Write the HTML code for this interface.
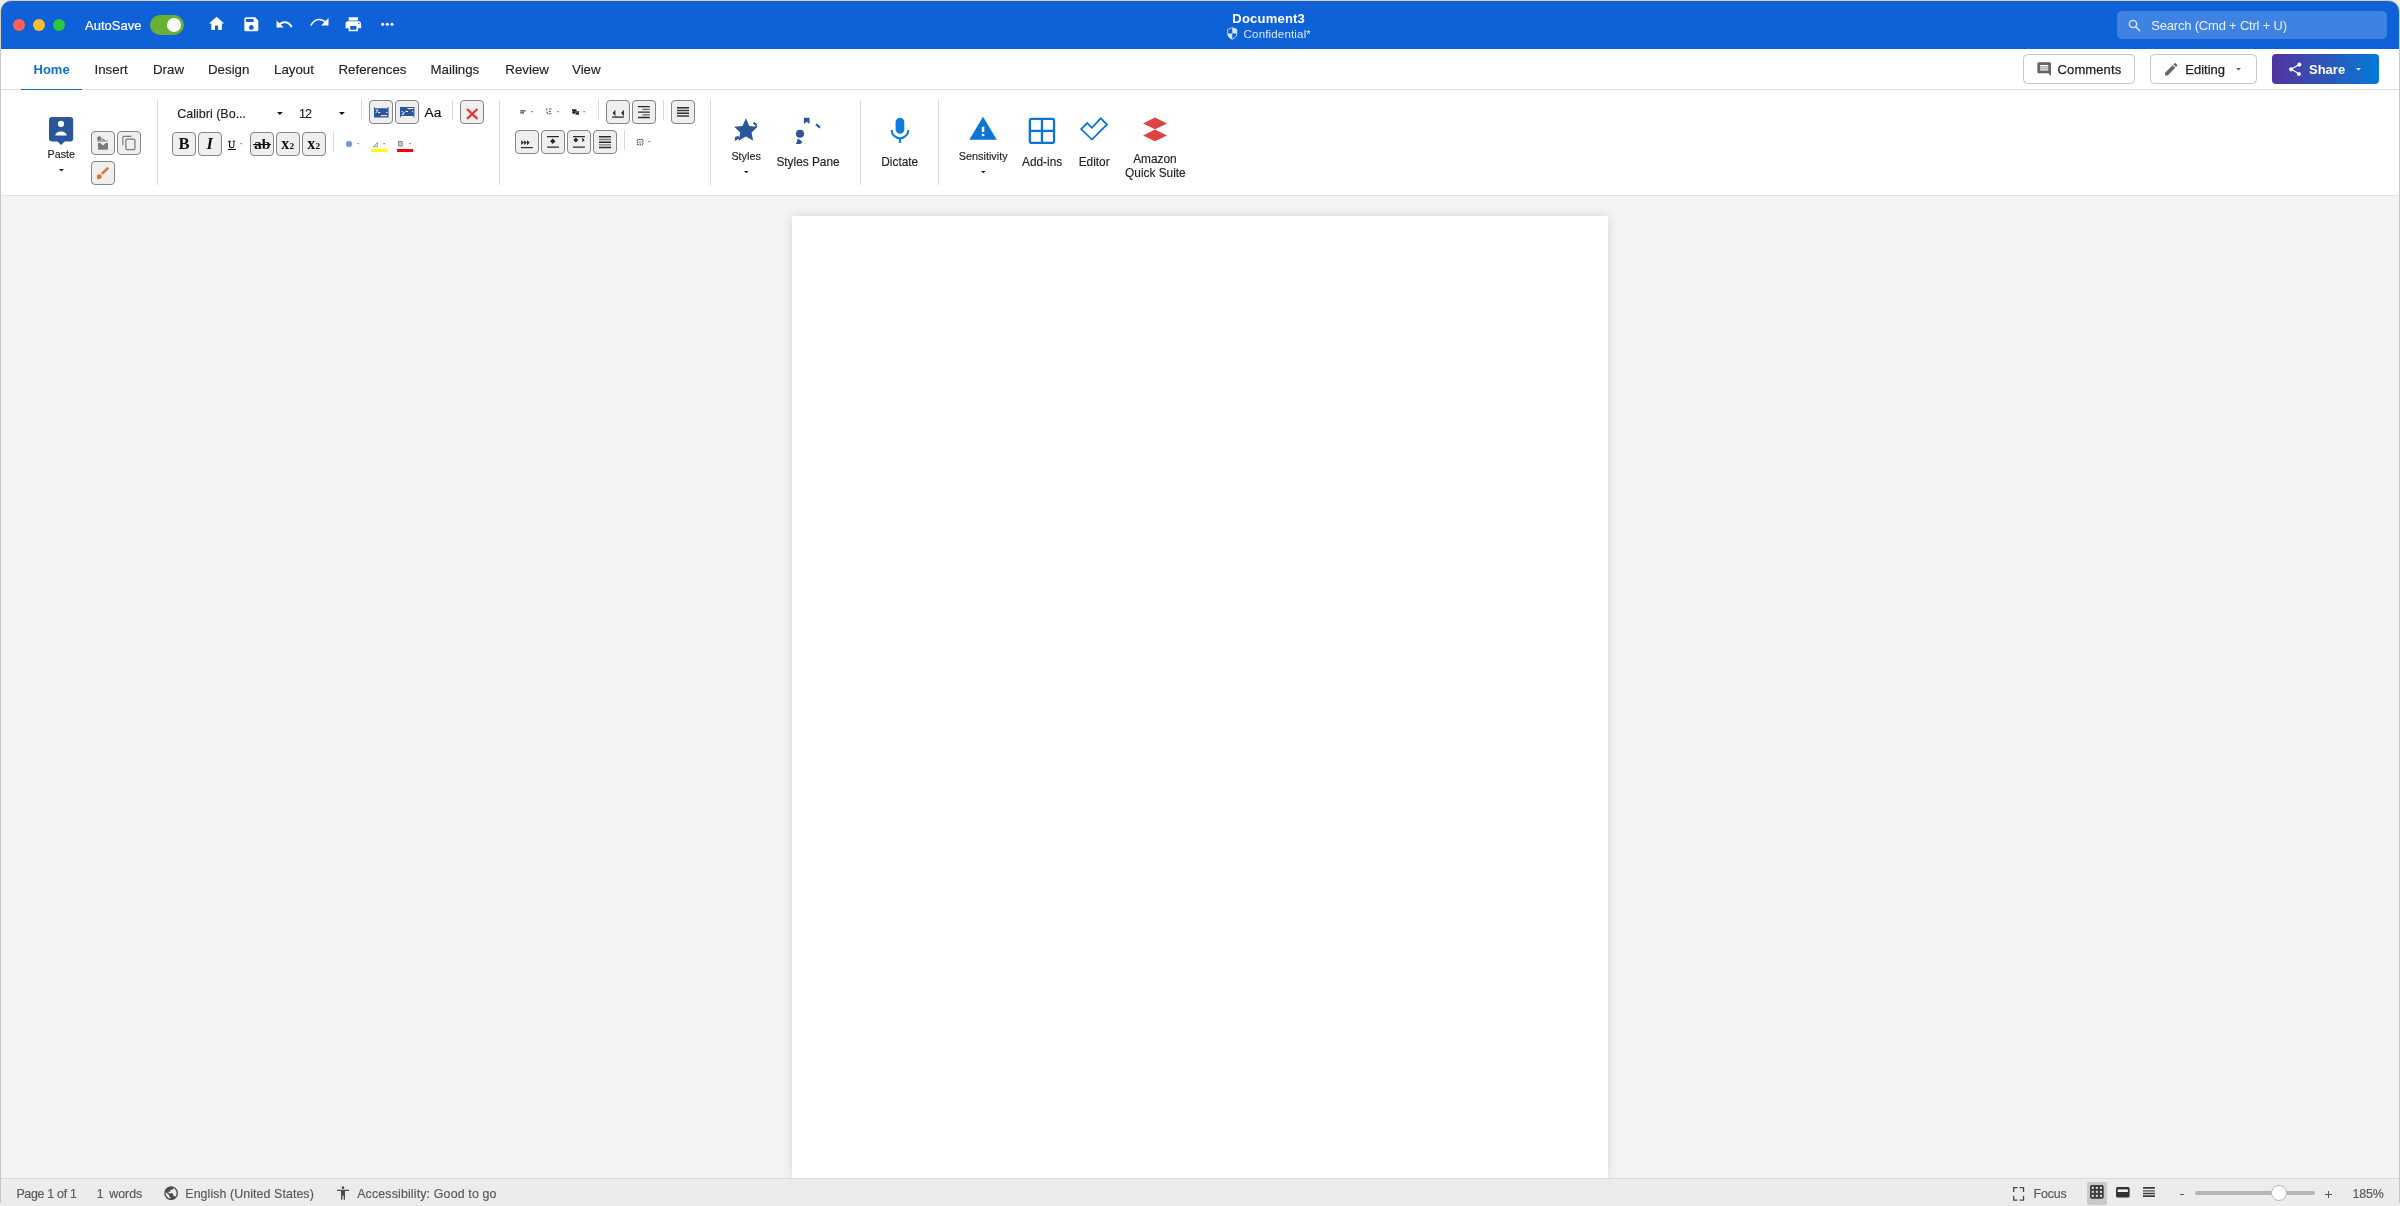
<!DOCTYPE html>
<html>
<head>
<meta charset="utf-8">
<title>Document3</title>
<style>
*{box-sizing:border-box;margin:0;padding:0}
html,body{width:2400px;height:1206px;overflow:hidden;background:#efefef;font-family:"Liberation Sans",sans-serif;}
.abs{position:absolute}
#root{position:absolute;left:0;top:0;width:2400px;height:1206px;will-change:transform}
.t{position:absolute;white-space:nowrap}
.btn{background:#efefef;border:1px solid #858585;border-radius:4px}
svg{overflow:visible}
</style>
</head>
<body>
<div id="root">
<div class="abs" style="left:0px;top:0px;width:2400.00px;height:49.00px;background:#dcd2c2;border-radius:11px 11px 0 0"></div>
<div class="abs" style="left:0px;top:49px;width:2400.00px;height:1154.00px;background:#c6c6c6;"></div>
<div class="abs" style="left:0px;top:1203px;width:2400.00px;height:3.00px;background:#ececec;"></div>
<div class="abs" style="left:1px;top:1px;width:2398.00px;height:48.00px;background:#0e61d7;border-radius:10px 10px 0 0"></div>
<div class="abs" style="left:1px;top:49px;width:2398.00px;height:146.00px;background:#ffffff;"></div>
<div class="abs" style="left:1px;top:89px;width:2398.00px;height:1.00px;background:#dfdfdf;"></div>
<div class="abs" style="left:1px;top:195px;width:2398.00px;height:1.00px;background:#e1e1e1;"></div>
<div class="abs" style="left:1px;top:196px;width:2398.00px;height:982.00px;background:#f3f3f3;"></div>
<div class="abs" style="left:792px;top:216px;width:816px;height:962px;background:#fff;box-shadow:0 0 9px rgba(0,0,0,.115)"></div>
<div class="abs" style="left:1px;top:1178px;width:2398.00px;height:28.00px;background:#ececec;"></div>
<div class="abs" style="left:1px;top:1178px;width:2398.00px;height:1.00px;background:#dbdbdb;"></div>
<div class="abs" style="left:13px;top:19px;width:12.00px;height:12.00px;background:#ff5f57;border-radius:6px"></div>
<div class="abs" style="left:33px;top:19px;width:12.00px;height:12.00px;background:#febc2e;border-radius:6px"></div>
<div class="abs" style="left:53px;top:19px;width:12.00px;height:12.00px;background:#28c840;border-radius:6px"></div>
<div class="t" style="left:85.00px;top:18px;font-size:13px;line-height:15px;color:#fff;-webkit-text-stroke:0.2px #fff;">AutoSave</div>
<div class="abs" style="left:150px;top:15px;width:34.00px;height:20.00px;background:#68b034;border-radius:10px"></div>
<div class="abs" style="left:167px;top:18px;width:14.00px;height:14.00px;background:#fff;border-radius:7px"></div>
<svg class="abs" style="left:206.8px;top:14.2px" width="19.2" height="19.2" viewBox="0 0 24 24"><path fill="#fff" d="M10 20v-5.5h4V20h4.6v-8h2.9L12 3.4 2.5 12h2.9v8z"/></svg>
<svg class="abs" style="left:241.7px;top:14.7px" width="18.67" height="18.67" viewBox="0 0 24 24"><path fill="#fff" d="M17 3H5c-1.11 0-2 .9-2 2v14c0 1.1.89 2 2 2h14c1.1 0 2-.9 2-2V7l-4-4zm-5 16c-1.66 0-3-1.34-3-3s1.34-3 3-3 3 1.34 3 3-1.34 3-3 3zm3-10H5V5h10v4z"/></svg>
<svg class="abs" style="left:275.4px;top:14.5px" width="18.67" height="18.67" viewBox="0 0 24 24"><path fill="#fff" d="M12.5 8c-2.65 0-5.05.99-6.9 2.6L2 7v9h9l-3.62-3.62c1.39-1.16 3.16-1.88 5.12-1.88 3.54 0 6.55 2.31 7.6 5.5l2.37-.78C21.08 11.03 17.15 8 12.5 8z"/></svg>
<svg class="abs" style="left:309.6px;top:13.7px" width="18.67" height="18.67" viewBox="0 0 24 24"><path fill="none" stroke="#fff" stroke-width="1.9" stroke-linecap="round" d="M1.4 14.2C4 9.5 8 7 12 7c3.5 0 6.3 1.6 8.3 4.3"/><path fill="#fff" d="M23.8 5.2v9.6h-9.4z"/></svg>
<svg class="abs" style="left:343.5px;top:14.7px" width="18.67" height="18.67" viewBox="0 0 24 24"><path fill="#fff" d="M19 8H5c-1.66 0-3 1.34-3 3v6h4v4h12v-4h4v-6c0-1.66-1.34-3-3-3zm-3 11H8v-5h8v5zm3-7c-.55 0-1-.45-1-1s.45-1 1-1 1 .45 1 1-.45 1-1 1zm-1-9H6v4h12V3z"/></svg>
<svg class="abs" style="left:377.5px;top:14.9px" width="18.67" height="18.67" viewBox="0 0 24 24"><circle cx="6" cy="12" r="1.95" fill="#fff"/><circle cx="12" cy="12" r="1.95" fill="#fff"/><circle cx="18" cy="12" r="1.95" fill="#fff"/></svg>
<div class="t" style="left:1232.30px;top:11px;font-size:13px;line-height:15px;color:#fff;font-weight:bold;letter-spacing:0.22px;">Document3</div>
<div class="t" style="left:1243.60px;top:28px;font-size:11.5px;line-height:12px;color:rgba(255,255,255,.86);letter-spacing:0.17px;">Confidential*</div>
<svg class="abs" style="left:1227px;top:26.5px" width="10.5" height="12.9" viewBox="0 0 22 27"><path d="M11 1.5 20.5 5v8.5c0 5.6-4 10-9.5 12C5 23.5 1.5 19.1 1.5 13.5V5z" fill="none" stroke="rgba(255,255,255,.84)" stroke-width="1.8"/><path d="M11 1.5 20.5 5v8.5H11z" fill="rgba(255,255,255,.84)"/><path d="M11 13.5v12C5 23.5 1.5 19.1 1.5 13.5z" fill="rgba(255,255,255,.84)"/></svg>
<div class="abs" style="left:2117px;top:11px;width:270.00px;height:28.00px;background:#3f83e2;border-radius:5px"></div>
<div class="t" style="left:2151.30px;top:18px;font-size:13px;line-height:15px;color:rgba(255,255,255,.88);letter-spacing:-0.2px;">Search (Cmd + Ctrl + U)</div>
<svg class="abs" style="left:2128.3px;top:18.6px" width="13.2" height="13.2" viewBox="0 0 14 14"><circle cx="5.3" cy="5.3" r="3.9" fill="none" stroke="rgba(255,255,255,.84)" stroke-width="1.4"/><path d="M8.2 8.2 12.4 12.4" stroke="rgba(255,255,255,.84)" stroke-width="1.5" stroke-linecap="round"/></svg>
<div class="t" style="left:33.50px;top:62px;font-size:13px;line-height:15px;color:#0f6fc6;font-weight:bold;">Home</div>
<div class="t" style="left:94.50px;top:62px;font-size:13.3px;line-height:15px;color:#242424;-webkit-text-stroke:0.15px #242424;">Insert</div>
<div class="t" style="left:153.00px;top:62px;font-size:13.3px;line-height:15px;color:#242424;-webkit-text-stroke:0.15px #242424;">Draw</div>
<div class="t" style="left:208.00px;top:62px;font-size:13.3px;line-height:15px;color:#242424;-webkit-text-stroke:0.15px #242424;">Design</div>
<div class="t" style="left:274.00px;top:62px;font-size:13.3px;line-height:15px;color:#242424;-webkit-text-stroke:0.15px #242424;">Layout</div>
<div class="t" style="left:338.50px;top:62px;font-size:13.3px;line-height:15px;color:#242424;-webkit-text-stroke:0.15px #242424;">References</div>
<div class="t" style="left:430.50px;top:62px;font-size:13.3px;line-height:15px;color:#242424;-webkit-text-stroke:0.15px #242424;">Mailings</div>
<div class="t" style="left:505.30px;top:62px;font-size:13.3px;line-height:15px;color:#242424;-webkit-text-stroke:0.15px #242424;">Review</div>
<div class="t" style="left:572.00px;top:62px;font-size:13.3px;line-height:15px;color:#242424;-webkit-text-stroke:0.15px #242424;">View</div>
<div class="abs" style="left:21px;top:88.7px;width:61.00px;height:1.50px;background:#0f6fc6;"></div>
<div class="abs" style="left:2023px;top:54px;width:112px;height:30px;border:1px solid #c6c6c6;border-radius:4.5px;background:#fff"></div>
<svg class="abs" style="left:2035.8px;top:60.6px" width="16.4" height="16.4" viewBox="0 0 24 24"><path fill="#666" d="M21.99 4c0-1.1-.89-2-1.990-2H4c-1.100 0-2 .9-2 2v12c0 1.100.9 2 2 2h14l4 4-.010-18zM18 14H6v-2h12v2zm0-3H6V9h12v2zm0-3H6V6h12v2z"/></svg>
<div class="t" style="left:2057.60px;top:62px;font-size:13px;line-height:15px;color:#1f1f1f;letter-spacing:0.1px;-webkit-text-stroke:0.25px #1f1f1f;">Comments</div>
<div class="abs" style="left:2150px;top:54px;width:107px;height:30px;border:1px solid #c6c6c6;border-radius:4.5px;background:#fff"></div>
<svg class="abs" style="left:2162.7px;top:61.1px" width="16.5" height="16.5" viewBox="0 0 24 24"><path fill="#666" d="M3 17.25V21h3.750L17.810 9.940l-3.750-3.750L3 17.250zM20.710 7.040c.39-.39.39-1.020 0-1.410l-2.340-2.340c-.39-.39-1.020-.39-1.410 0l-1.830 1.830 3.750 3.750 1.830-1.830z"/></svg>
<div class="t" style="left:2185.30px;top:62px;font-size:13px;line-height:15px;color:#1f1f1f;-webkit-text-stroke:0.25px #1f1f1f;">Editing</div>
<svg class="abs" style="left:2235.5px;top:67.9px" width="5" height="2.6" viewBox="0 0 10 5"><path d="M0 0h10L5 5z" fill="#666"/></svg>
<div class="abs" style="left:2272px;top:54px;width:107px;height:30px;border-radius:4px;background:linear-gradient(90deg,#5233a0 0%,#3a4cb0 35%,#1e63c4 68%,#0479d7 100%)"></div>
<svg class="abs" style="left:2286.8px;top:60.6px" width="16.5" height="16.5" viewBox="0 0 24 24"><path fill="#fff" d="M18 16.080c-.760 0-1.440.300-1.960.770L8.910 12.700c.05-.230.090-.460.090-.700s-.040-.470-.090-.700l7.050-4.110c.54.500 1.250.81 2.040.81 1.660 0 3-1.340 3-3s-1.340-3-3-3-3 1.340-3 3c0 .24.040.47.09.7L8.040 9.810C7.500 9.310 6.790 9 6 9c-1.660 0-3 1.340-3 3s1.340 3 3 3c.79 0 1.500-.31 2.040-.81l7.120 4.160c-.5.210-.8.430-.8.650 0 1.610 1.310 2.920 2.920 2.920s2.920-1.310 2.920-2.920-1.310-2.920-2.920-2.920z"/></svg>
<div class="t" style="left:2309.00px;top:62px;font-size:13px;line-height:15px;color:#fff;font-weight:bold;">Share</div>
<svg class="abs" style="left:2355.6px;top:67.8px" width="5" height="2.6" viewBox="0 0 10 5"><path d="M0 0h10L5 5z" fill="#fff"/></svg>
<svg class="abs" style="left:49px;top:116.5px" width="24.2" height="28.2" viewBox="0 0 24.2 28.2"><path fill="#2b579a" d="M3 0h18.2a3 3 0 0 1 3 3v18.6a3 3 0 0 1-3 3H15.700L12.100 28.100 8.500 24.600H3a3 3 0 0 1-3-3V3a3 3 0 0 1 3-3z"/><circle cx="12" cy="6.9" r="3.05" fill="#fff"/><path fill="#fff" d="M6.300 18.600c0-2.300 2.500-4 5.700-4s5.700 1.700 5.700 4z"/></svg>
<div class="t" style="left:47.60px;top:148px;font-size:10.7px;line-height:12px;color:#1f1f1f;-webkit-text-stroke:0.15px #1f1f1f;">Paste</div>
<svg class="abs" style="left:58.6px;top:168.95px" width="4.8" height="2.5" viewBox="0 0 10 5"><path d="M0 0h10L5 5z" fill="#111"/></svg>
<div class="abs btn" style="left:91px;top:131px;width:24px;height:24px"></div>
<div class="abs btn" style="left:117px;top:131px;width:24px;height:24px"></div>
<div class="abs btn" style="left:91px;top:161px;width:24px;height:24px"></div>
<svg class="abs" style="left:96px;top:135px" width="14" height="16" viewBox="0 0 14 16"><circle cx="3.300" cy="3.500" r="2.200" fill="#7a7a7a"/><path d="M1.5 6h10" stroke="#7a7a7a" stroke-width="1.1"/><path fill="#7a7a7a" d="M2 8h2.300l2.700 2.600L9.700 8H12v5.800a1 1 0 0 1-1 1H3a1 1 0 0 1-1-1z"/><path d="M5.500 3.600 9 5.400" stroke="#7a7a7a" stroke-width="1"/></svg>
<svg class="abs" style="left:121px;top:135px" width="16" height="16" viewBox="0 0 16 16"><rect x="4.900" y="4.100" width="9" height="10.400" rx="1" fill="none" stroke="#7a7a7a" stroke-width="1.250"/><path d="M1.900 10.500V2.300a.9.900 0 0 1 .9-.9h7.700" fill="none" stroke="#7a7a7a" stroke-width="1.150"/></svg>
<svg class="abs" style="left:95px;top:165px" width="16" height="16" viewBox="0 0 16 16"><path d="M13.200 2.700 6.900 8.900" stroke="#e8701f" stroke-width="2.500" stroke-linecap="butt"/><circle cx="4.300" cy="11.700" r="2.350" fill="#e8701f"/><path fill="#e8701f" d="M2.300 11.500 1.800 14.100l2.600-.2z"/></svg>
<div class="abs" style="left:156.5px;top:100px;width:1.00px;height:85.00px;background:#d9d9d9;"></div>
<div class="t" style="left:177.30px;top:107px;font-size:12.5px;line-height:14px;color:#1f1f1f;-webkit-text-stroke:0.15px #1f1f1f;">Calibri (Bo...</div>
<svg class="abs" style="left:277.1px;top:111.9px" width="5.8" height="3" viewBox="0 0 10 5"><path d="M0 0h10L5 5z" fill="#111"/></svg>
<div class="t" style="left:299.00px;top:107px;font-size:12.5px;line-height:14px;color:#1f1f1f;letter-spacing:-0.9px;-webkit-text-stroke:0.15px #1f1f1f;">12</div>
<svg class="abs" style="left:339.1px;top:111.7px" width="5.8" height="3" viewBox="0 0 10 5"><path d="M0 0h10L5 5z" fill="#111"/></svg>
<div class="abs" style="left:361.0px;top:100px;width:1.00px;height:20.00px;background:#d9d9d9;"></div>
<div class="abs btn" style="left:369px;top:100px;width:24px;height:24px"></div>
<div class="abs btn" style="left:395px;top:100px;width:24px;height:24px"></div>
<svg class="abs" style="left:373.8px;top:106.6px" width="14.6" height="10.6" viewBox="0 0 14.6 10.600"><path fill="#2b579a" d="M0 0h.8v1.300h13V0h.8v10.600H0z"/><path d="M1.800 3.200h2.500M1.600 5.800l2-1.600M4 5.500h2.300M12.300 5.500h1.200M6.800 8.700h6.300" stroke="#fff" stroke-width="1" fill="none"/></svg>
<svg class="abs" style="left:399.8px;top:107px" width="14.4" height="10.4" viewBox="0 0 14.400 10.400"><path fill="#2b579a" d="M0 0h14.400v10.400h-.8V9.100H.8v1.300H0z"/><path d="M7.500 1.600h5.800M1.600 4.700h1.200M3 6.500l1.800-1.400M5.600 4.500h2.300M12.100 4.700h1.200M1.800 7.200h2.300" stroke="#fff" stroke-width="1" fill="none"/></svg>
<div class="t" style="left:424.60px;top:105px;font-size:13.7px;line-height:15px;color:#111;-webkit-text-stroke:0.2px #111;">Aa</div>
<div class="abs" style="left:451.9px;top:100px;width:1.00px;height:20.00px;background:#d9d9d9;"></div>
<div class="abs btn" style="left:460px;top:100px;width:24px;height:24px"></div>
<svg class="abs" style="left:465.8px;top:107.5px" width="12.4" height="11.8" viewBox="0 0 12.400 11.800"><path d="M1 1l10.400 9.800M11.400 1 1 10.800" stroke="#e0393e" stroke-width="2.300" stroke-linecap="butt"/></svg>
<div class="abs btn" style="left:172px;top:132px;width:24px;height:24px"></div>
<div class="abs btn" style="left:198px;top:132px;width:24px;height:24px"></div>
<div class="abs btn" style="left:250px;top:132px;width:24px;height:24px"></div>
<div class="abs btn" style="left:276px;top:132px;width:24px;height:24px"></div>
<div class="abs btn" style="left:302px;top:132px;width:24px;height:24px"></div>
<div class="t" style="left:178.60px;top:134px;font-size:16.6px;line-height:19px;color:#111;font-weight:bold;font-family:'Liberation Serif',serif;">B</div>
<div class="t" style="left:206.50px;top:134px;font-size:16.6px;line-height:19px;color:#111;font-weight:bold;font-style:italic;font-family:'Liberation Serif',serif;">I</div>
<div class="t" style="left:228.10px;top:139px;font-size:10px;line-height:11px;color:#111;font-family:'Liberation Serif',serif;-webkit-text-stroke:0.3px #111;">U</div>
<div class="abs" style="left:228px;top:148.9px;width:8.00px;height:1.10px;background:#111;"></div>
<svg class="abs" style="left:240.04999999999998px;top:143.0px" width="2.3" height="1.8" viewBox="0 0 10 5"><path d="M0 0h10L5 5z" fill="#555"/></svg>
<div class="t" style="left:254.00px;top:135px;font-size:15.6px;line-height:17px;color:#111;font-weight:bold;font-family:'Liberation Serif',serif;">ab</div>
<div class="abs" style="left:253.2px;top:144px;width:18.00px;height:1.20px;background:#111;"></div>
<div class="t" style="left:281.20px;top:135px;font-size:16px;line-height:17px;color:#111;font-weight:bold;font-family:'Liberation Serif',serif;">x</div>
<div class="t" style="left:289.40px;top:141px;font-size:9.2px;line-height:10px;color:#111;font-weight:bold;font-family:'Liberation Serif',serif;">2</div>
<div class="t" style="left:307.30px;top:135px;font-size:16px;line-height:17px;color:#111;font-weight:bold;font-family:'Liberation Serif',serif;">x</div>
<div class="t" style="left:315.50px;top:141px;font-size:9.2px;line-height:10px;color:#111;font-weight:bold;font-family:'Liberation Serif',serif;">2</div>
<div class="abs" style="left:333.0px;top:132px;width:1.00px;height:20.00px;background:#d9d9d9;"></div>
<svg class="abs" style="left:345px;top:140px" width="8" height="8" viewBox="0 0 8 8"><circle cx="4" cy="4" r="3.300" fill="#4a77c8" opacity=".7"/><circle cx="4" cy="4" r="2" fill="#2b579a"/><path d="M4 .2v7.600M.2 4h7.600M1.300 1.300l5.400 5.400M6.700 1.300 1.300 6.700" stroke="#fff" stroke-width=".5" opacity=".7"/></svg>
<svg class="abs" style="left:356.90000000000003px;top:143.15px" width="2.4" height="1.5" viewBox="0 0 10 5"><path d="M0 0h10L5 5z" fill="#555"/></svg>
<svg class="abs" style="left:372.5px;top:141.8px" width="5" height="5.2" viewBox="0 0 5 5.200"><path d="M.5 4.700 4.300.6v4.100z" fill="none" stroke="#8a8a8a" stroke-width=".9"/></svg>
<svg class="abs" style="left:382.95000000000005px;top:143.0px" width="2.3" height="1.8" viewBox="0 0 10 5"><path d="M0 0h10L5 5z" fill="#555"/></svg>
<div class="abs" style="left:371px;top:149px;width:16.00px;height:3.00px;background:#ffff00;"></div>
<svg class="abs" style="left:398px;top:140.8px" width="5" height="5.4" viewBox="0 0 5 5.400"><rect x=".6" y=".5" width="3.600" height="4.500" fill="#cfcfcf" stroke="#8a8a8a" stroke-width="1"/></svg>
<svg class="abs" style="left:408.95000000000005px;top:143.0px" width="2.3" height="1.8" viewBox="0 0 10 5"><path d="M0 0h10L5 5z" fill="#555"/></svg>
<div class="abs" style="left:397px;top:149px;width:16.00px;height:3.00px;background:#ff0000;"></div>
<div class="abs" style="left:498.9px;top:100px;width:1.00px;height:85.00px;background:#d9d9d9;"></div>
<svg class="abs" style="left:520px;top:110px" width="6" height="4" viewBox="0 0 6 4"><path d="M.2.900h5.400M.2 2.900h3.800" stroke="#444" stroke-width="1.200"/></svg>
<svg class="abs" style="left:530.85px;top:111.0px" width="2.3" height="1.8" viewBox="0 0 10 5"><path d="M0 0h10L5 5z" fill="#555"/></svg>
<svg class="abs" style="left:545.5px;top:108.2px" width="6" height="6.8" viewBox="0 0 6 6.800"><path d="M.7.300v2.200M.3 4.200h1.100v2.200M2.700 1h2.900M2.700 3.400h2.300M2.700 5.800h2.900" stroke="#555" stroke-width=".9" fill="none"/></svg>
<svg class="abs" style="left:556.95px;top:111.0px" width="2.3" height="1.8" viewBox="0 0 10 5"><path d="M0 0h10L5 5z" fill="#555"/></svg>
<svg class="abs" style="left:571.6px;top:109px" width="7.2" height="6" viewBox="0 0 7.200 6"><path d="M0 1.100h4.500M2 3h5M3.500 4.900h3.500" stroke="#222" stroke-width="1.600"/><circle cx="1.700" cy="3.600" r="1.500" fill="#222"/></svg>
<svg class="abs" style="left:582.85px;top:111.0px" width="2.3" height="1.8" viewBox="0 0 10 5"><path d="M0 0h10L5 5z" fill="#555"/></svg>
<div class="abs" style="left:597.9px;top:100px;width:1.00px;height:20.00px;background:#d9d9d9;"></div>
<div class="abs btn" style="left:606px;top:100px;width:24px;height:24px"></div>
<div class="abs btn" style="left:632px;top:100px;width:24px;height:24px"></div>
<svg class="abs" style="left:612px;top:110px" width="12" height="8" viewBox="0 0 12 8"><path fill="#2a2a2a" d="M.6 3 3.400-.3v6.600zM9.100 3 11.900-.3v6.600z"/><path d="M.1 7.100h11.800" stroke="#2a2a2a" stroke-width="1.300"/></svg>
<svg class="abs" style="left:638.2px;top:105.8px" width="11.8" height="12.2" viewBox="0 0 11.800 12.200"><path d="M0 .7h11.800M0 6.200h11.800M0 11.500h11.800" stroke="#2a2a2a" stroke-width="1.300"/><path d="M4.400 3.400h7.400M4.400 8.900h7.400" stroke="#666" stroke-width="1.300"/></svg>
<div class="abs" style="left:662.9px;top:100px;width:1.00px;height:20.00px;background:#d9d9d9;"></div>
<div class="abs btn" style="left:671px;top:100px;width:24px;height:24px"></div>
<svg class="abs" style="left:677px;top:107px" width="12" height="10" viewBox="0 0 12 10"><path d="M0 .8h12M0 6.300h12" stroke="#2a2a2a" stroke-width="1.500"/><path d="M0 3.600h12M0 9.100h12" stroke="#3a3a3a" stroke-width="1.500"/></svg>
<div class="abs btn" style="left:515px;top:130px;width:24px;height:24px"></div>
<div class="abs btn" style="left:541px;top:130px;width:24px;height:24px"></div>
<div class="abs btn" style="left:567px;top:130px;width:24px;height:24px"></div>
<div class="abs btn" style="left:593px;top:130px;width:24px;height:24px"></div>
<svg class="abs" style="left:521px;top:139.6px" width="12" height="8.4" viewBox="0 0 12 8.400"><path fill="#2a2a2a" d="M.2.200 3 2.600.2 5zM3.100.2 5.900 2.600 3.100 5zM6 .2 8.800 2.600 6 5z"/><path d="M0 7.600h11.900" stroke="#2a2a2a" stroke-width="1.200"/></svg>
<svg class="abs" style="left:547px;top:136px" width="12" height="12" viewBox="0 0 12 12"><path d="M0 .7h11.900M0 11.200h11.900" stroke="#2a2a2a" stroke-width="1.200"/><path fill="#2a2a2a" d="M5.800 2.600 8.500 5.300 5.800 8 3.100 5.300z"/></svg>
<svg class="abs" style="left:573px;top:136px" width="12" height="12" viewBox="0 0 12 12"><path d="M0 .7h11.900M0 11.200h11.900" stroke="#2a2a2a" stroke-width="1.200"/><path fill="#2a2a2a" d="M2.800 1.400 5.300 3.900 2.800 6.400.3 3.900zM9.300 1.600 11.700 3.900 9.300 6.200z"/></svg>
<svg class="abs" style="left:599px;top:136px" width="12" height="12.4" viewBox="0 0 12 12.400"><path d="M0 .7h12M0 6.200h12M0 11.500h12" stroke="#2a2a2a" stroke-width="1.400"/><path d="M0 3.450h12M0 8.900h12" stroke="#777" stroke-width="1.400"/></svg>
<div class="abs" style="left:623.9px;top:130px;width:1.00px;height:20.00px;background:#d9d9d9;"></div>
<svg class="abs" style="left:636.8px;top:138.9px" width="6.4" height="6.4" viewBox="0 0 6.400 6.400"><rect x=".5" y=".5" width="5.400" height="5.400" fill="none" stroke="#333" stroke-width="1" stroke-dasharray="1.100 .7"/><path d="M3.200.5v5.400M.5 3.200h5.400" stroke="#777" stroke-width=".8" stroke-dasharray="1 .7"/></svg>
<svg class="abs" style="left:647.95px;top:140.9px" width="2.3" height="1.8" viewBox="0 0 10 5"><path d="M0 0h10L5 5z" fill="#555"/></svg>
<div class="abs" style="left:709.9px;top:100px;width:1.00px;height:85.00px;background:#d9d9d9;"></div>
<svg class="abs" style="left:0;top:0" width="2400" height="200" viewBox="0 0 2400 200"><polygon points="745.90,118.30 749.37,125.93 757.69,126.87 751.51,132.52 753.19,140.73 745.90,136.60 738.61,140.73 740.29,132.52 734.11,126.87 742.43,125.93" fill="#2b579a"/><path d="M753.6 122.600l2.900 2.600" stroke="#2b579a" stroke-width="2.100"/><path d="M756.700 124.800v3l-2.400-.3z" fill="#2b579a"/><path d="M735 137l3.400-1.200 1.200 2.600-4.800 2.600z" fill="#2b579a"/></svg>
<div class="t" style="left:731.40px;top:150px;font-size:10.8px;line-height:12px;color:#1f1f1f;-webkit-text-stroke:0.15px #1f1f1f;">Styles</div>
<svg class="abs" style="left:743.6px;top:170.70000000000002px" width="4.6" height="2.4" viewBox="0 0 10 5"><path d="M0 0h10L5 5z" fill="#111"/></svg>
<svg class="abs" style="left:0;top:0" width="2400" height="200" viewBox="0 0 2400 200"><path fill="#2b579a" d="M803.900 117.700h5.600v6.300l-2.800-2.200-2.800 2.200z"/><path d="M816 124.300l4 3.300" stroke="#2b579a" stroke-width="2.100"/><circle cx="800" cy="133.700" r="4.050" fill="#2b579a"/><path fill="#2b579a" d="M796.100 144.100l1.600-5.300c1.900.4 3.600 1.600 4.500 3.400l-1.900 1.900z"/></svg>
<div class="t" style="left:776.40px;top:155px;font-size:11.85px;line-height:14px;color:#1f1f1f;-webkit-text-stroke:0.15px #1f1f1f;">Styles Pane</div>
<div class="abs" style="left:860.1px;top:100px;width:1.00px;height:85.00px;background:#d9d9d9;"></div>
<svg class="abs" style="left:0;top:0" width="2400" height="200" viewBox="0 0 2400 200"><rect x="895.600" y="117.700" width="8.700" height="16" rx="4.350" fill="#0f7bdc"/><path d="M891.600 129.900a8.350 8.350 0 0 0 16.700 0" fill="none" stroke="#0f7bdc" stroke-width="2"/><path d="M899.950 138v4.900" stroke="#0f7bdc" stroke-width="2.400"/></svg>
<div class="t" style="left:881.30px;top:155px;font-size:11.85px;line-height:14px;color:#1f1f1f;-webkit-text-stroke:0.15px #1f1f1f;">Dictate</div>
<div class="abs" style="left:938.1px;top:100px;width:1.00px;height:85.00px;background:#d9d9d9;"></div>
<svg class="abs" style="left:0;top:0" width="2400" height="200" viewBox="0 0 2400 200"><path fill="#0b74d4" d="M983 116.800 996.800 139.800H969.300z"/><rect x="981.800" y="126.800" width="2.500" height="5.200" fill="#fff"/><rect x="981.800" y="133.800" width="2.500" height="2.300" fill="#fff"/><rect x="1029.850" y="118.850" width="24.200" height="24.100" rx="2" fill="none" stroke="#0b74d4" stroke-width="2.300"/><path d="M1041.950 119v24M1030 130.900h24" stroke="#0b74d4" stroke-width="2.300"/><path d="M1081.100 129.100 1087.200 123.100 1091.900 127.800 1100.700 118.300 1107 124.500 1091.900 139.600z" fill="none" stroke="#0b74d4" stroke-width="1.800" stroke-linejoin="miter"/><path fill="#e04143" d="M1155 117.600l12 5.850-12 5.850-12-5.850zM1155 129.500l12 5.900-12 5.900-12-5.900z"/></svg>
<div class="t" style="left:958.80px;top:150px;font-size:10.85px;line-height:12px;color:#1f1f1f;-webkit-text-stroke:0.15px #1f1f1f;">Sensitivity</div>
<svg class="abs" style="left:980.8000000000001px;top:170.70000000000002px" width="4.6" height="2.4" viewBox="0 0 10 5"><path d="M0 0h10L5 5z" fill="#111"/></svg>
<div class="t" style="left:1022.00px;top:155px;font-size:11.85px;line-height:14px;color:#1f1f1f;-webkit-text-stroke:0.15px #1f1f1f;">Add-ins</div>
<div class="t" style="left:1078.70px;top:155px;font-size:11.85px;line-height:14px;color:#1f1f1f;-webkit-text-stroke:0.15px #1f1f1f;">Editor</div>
<div class="t" style="left:1133.20px;top:152px;font-size:11.85px;line-height:14px;color:#1f1f1f;-webkit-text-stroke:0.15px #1f1f1f;">Amazon</div>
<div class="t" style="left:1125.10px;top:166px;font-size:11.85px;line-height:14px;color:#1f1f1f;-webkit-text-stroke:0.15px #1f1f1f;">Quick Suite</div>
<div class="t" style="left:16.40px;top:1187px;font-size:12.4px;line-height:14px;color:#5a5a5a;letter-spacing:-0.29px;-webkit-text-stroke:0.18px #5a5a5a;">Page 1 of 1</div>
<div class="t" style="left:96.80px;top:1187px;font-size:12.4px;line-height:14px;color:#5a5a5a;-webkit-text-stroke:0.18px #5a5a5a;">1</div>
<div class="t" style="left:109.20px;top:1187px;font-size:12.4px;line-height:14px;color:#5a5a5a;-webkit-text-stroke:0.18px #5a5a5a;">words</div>
<svg class="abs" style="left:162.8px;top:1184.75px" width="16.3" height="16.3" viewBox="0 0 24 24"><path fill="#4d4d4d" d="M12 2C6.480 2 2 6.480 2 12s4.480 10 10 10 10-4.480 10-10S17.520 2 12 2zm-1 17.930c-3.950-.490-7-3.850-7-7.930 0-.620.080-1.210.210-1.790L9 15v1c0 1.100.9 2 2 2v1.930zm6.900-2.540c-.260-.810-1-1.390-1.900-1.390h-1v-3c0-.550-.450-1-1-1H8v-2h2c.550 0 1-.450 1-1V7h2c1.100 0 2-.9 2-2v-.410c2.930 1.190 5 4.060 5 7.410 0 2.080-.8 3.970-2.100 5.390z"/></svg>
<div class="t" style="left:185.30px;top:1187px;font-size:12.4px;line-height:14px;color:#5a5a5a;letter-spacing:0.08px;-webkit-text-stroke:0.18px #5a5a5a;">English (United States)</div>
<svg class="abs" style="left:335px;top:1184.7px" width="16" height="16" viewBox="0 0 24 24"><path fill="#4a4a4a" d="M12 2c1.100 0 2 .9 2 2s-.9 2-2 2-2-.9-2-2 .9-2 2-2zm9 7h-6v13h-2v-6h-2v6H9V9H3V7h18v2z"/></svg>
<div class="t" style="left:357.20px;top:1187px;font-size:12.4px;line-height:14px;color:#5a5a5a;letter-spacing:0.15px;-webkit-text-stroke:0.18px #5a5a5a;">Accessibility: Good to go</div>
<svg class="abs" style="left:2012.9px;top:1186.8px" width="11.2" height="13.8" viewBox="0 0 11.200 13.800"><path d="M.65 5V.65h3.900M6.700 .65h3.850V5M10.550 8.800v4.350H6.700M4.550 13.150H.65V8.800" fill="none" stroke="#4a4a4a" stroke-width="1.300"/></svg>
<div class="t" style="left:2033.60px;top:1187px;font-size:12.4px;line-height:14px;color:#5a5a5a;letter-spacing:-0.15px;-webkit-text-stroke:0.18px #5a5a5a;">Focus</div>
<div class="abs" style="left:2087px;top:1182px;width:20.00px;height:22.80px;background:#c9c9c9;border-radius:2.500px"></div>
<svg class="abs" style="left:2090.2px;top:1185.2px" width="13.7" height="13.7" viewBox="0 0 13.700 13.700"><rect width="13.700" height="13.700" rx="1.800" fill="#3a3a3a"/><rect x="1.7" y="1.8" width="2.100" height="2.100" fill="#d6d6d6"/><rect x="1.7" y="5.8" width="2.100" height="2.100" fill="#d6d6d6"/><rect x="1.7" y="9.8" width="2.100" height="2.100" fill="#d6d6d6"/><rect x="5.8" y="1.8" width="2.100" height="2.100" fill="#d6d6d6"/><rect x="5.8" y="5.8" width="2.100" height="2.100" fill="#d6d6d6"/><rect x="5.8" y="9.8" width="2.100" height="2.100" fill="#d6d6d6"/><rect x="9.9" y="1.8" width="2.100" height="2.100" fill="#d6d6d6"/><rect x="9.9" y="5.8" width="2.100" height="2.100" fill="#d6d6d6"/><rect x="9.9" y="9.8" width="2.100" height="2.100" fill="#d6d6d6"/></svg>
<svg class="abs" style="left:2116.2px;top:1186.8px" width="13.6" height="10.5" viewBox="0 0 13.600 10.500"><rect width="13.600" height="10.500" rx="1.500" fill="#333"/><rect x="1.700" y="2.400" width="10.200" height="2.600" fill="#f4f4f4"/></svg>
<svg class="abs" style="left:2143.1px;top:1187px" width="11.9" height="10" viewBox="0 0 11.900 10"><path d="M0 .9h11.900M0 6.500h11.900M0 9.100h11.900" stroke="#3c3c3c" stroke-width="1.700"/><path d="M0 3.900h11.900" stroke="#666" stroke-width="1.500"/></svg>
<div class="abs" style="left:2179.6px;top:1193.6px;width:4.30px;height:1.20px;background:#555;"></div>
<div class="abs" style="left:2195px;top:1191px;width:119.70px;height:4.20px;background:#b5b5b5;border-radius:2.100px"></div>
<div class="abs" style="left:2271px;top:1185.300px;width:15.600px;height:15.600px;border-radius:8px;background:#fff;border:1px solid #b9b9b9"></div>
<div class="abs" style="left:2325.2px;top:1193.9px;width:6.70px;height:1.20px;background:#555;"></div>
<div class="abs" style="left:2327.95px;top:1191px;width:1.20px;height:6.90px;background:#555;"></div>
<div class="t" style="left:2352.50px;top:1187px;font-size:12.4px;line-height:14px;color:#5a5a5a;letter-spacing:-0.1px;-webkit-text-stroke:0.18px #5a5a5a;">185%</div>
</div>
</body>
</html>
